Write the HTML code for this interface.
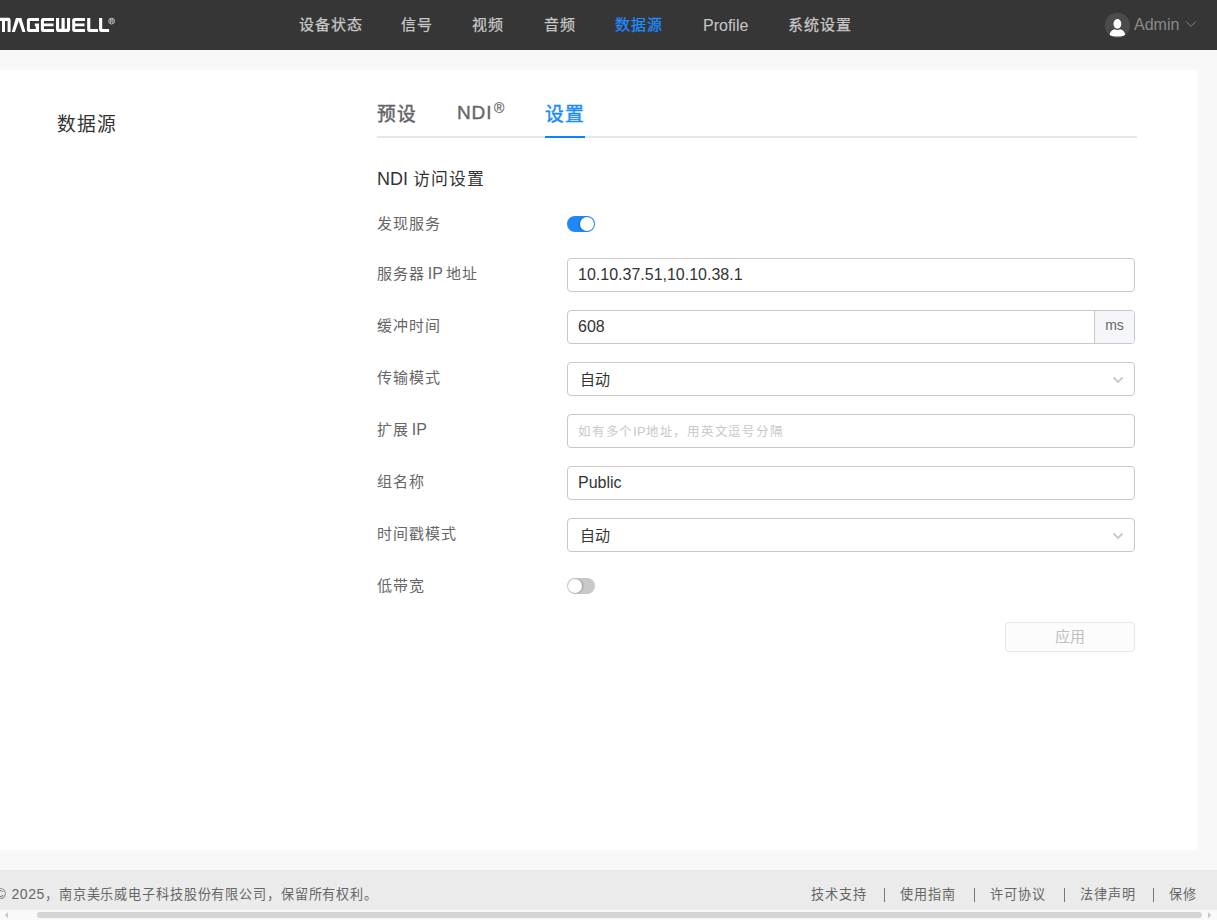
<!DOCTYPE html>
<html lang="zh-CN">
<head>
<meta charset="utf-8">
<style>
*{box-sizing:border-box;margin:0;padding:0}
html,body{width:1217px;height:920px;overflow:hidden;background:#f8f8f8;font-family:"Liberation Sans",sans-serif;color:#333}
.t{position:absolute;white-space:nowrap}
#hdr{position:absolute;left:0;top:0;width:1217px;height:50px;background:#363636}
.nav{position:absolute;top:14.7px;font-size:15px;letter-spacing:1px;color:#c8c8c8;-webkit-text-stroke:0.25px currentColor;line-height:20px;white-space:nowrap}
.L16{font-size:16px;letter-spacing:0;-webkit-text-stroke:0 !important}
.nav.L16{top:15.5px}
.nav.act{color:#1f8cff}
#panel{position:absolute;left:0;top:70px;width:1197px;height:780px;background:#fff}
.lbl{position:absolute;left:377px;font-size:15px;letter-spacing:1px;color:#666;line-height:20px;white-space:nowrap}
.inp{position:absolute;left:567px;width:568px;height:34px;border:1px solid #c8c8c8;border-radius:4px;background:#fff}
.inp>span{position:absolute;left:10px;top:6px;font-size:16px;line-height:20px;color:#333;white-space:nowrap}
.chev{position:absolute;right:10px;top:13px}
.tab{position:absolute;top:102.5px;font-size:18.75px;letter-spacing:1.25px;line-height:24px;color:#666;-webkit-text-stroke:0.45px #666}
#footer{position:absolute;left:0;top:870px;width:1217px;height:40px;background:#ebebeb}
.ft{position:absolute;top:16px;font-size:13.125px;letter-spacing:0.875px;line-height:18px;color:#666;white-space:nowrap}
.sep{position:absolute;top:18px;width:1px;height:14px;background:#777}
#sb{position:absolute;left:0;top:910px;width:1217px;height:10px;background:#f9f9f9}
</style>
</head>
<body>
<div id="hdr">
  <svg class="t" style="left:0;top:0" width="120" height="50" viewBox="0 0 120 50">
    <g fill="#fff">
      <!-- M (cut) -->
      <path d="M0 17.8H8.4Q10.6 17.8 10.6 20V32H7.6V21.1H5V32H2V21.1H0Z"/>
      <path d="M11.8 32L15.9 18H21.4L25.5 32H22.4L18.65 20.9L14.9 32Z"/>
      <path d="M29.4 18H39V21H29.9V29H35.8V26.2H34.8V23.4H39V32H29.4Q26.9 32 26.9 29.5V20.5Q26.9 18 29.4 18Z"/>
      <path d="M43.4 18H54V21H43.9V23.4H53.5V26.3H43.9V29H54V32H43.4Q40.9 32 40.9 29.5V20.5Q40.9 18 43.4 18Z"/>
      <path d="M56 18H59.1V28.7H61.5V18H64.7V28.7H67V18H70.1V29.2Q70.1 32 67.3 32H58.8Q56 32 56 29.2Z"/>
      <path d="M74.7 18H85V21H75.2V23.4H84.5V26.3H75.2V29H85V32H74.7Q72.2 32 72.2 29.5V20.5Q72.2 18 74.7 18Z"/>
      <path d="M87.2 18H90.3V29H98V32H89.7Q87.2 32 87.2 29.5Z"/>
      <path d="M99.1 18H102.2V29H109.1V32H101.6Q99.1 32 99.1 29.5Z"/>
    </g>
    <circle cx="111.6" cy="21.1" r="2.9" fill="none" stroke="#ddd" stroke-width="0.8"/>
    <path d="M110.6 23V19.4H112.1Q113 19.4 113 20.3Q113 21.1 112.1 21.1H110.6M112.1 21.1L113 23" fill="none" stroke="#ddd" stroke-width="0.7"/>
  </svg>
  <div class="nav" style="left:299px">设备状态</div>
  <div class="nav" style="left:401px">信号</div>
  <div class="nav" style="left:472px">视频</div>
  <div class="nav" style="left:544px">音频</div>
  <div class="nav act" style="left:615px">数据源</div>
  <div class="nav L16" style="left:703px">Profile</div>
  <div class="nav" style="left:788px">系统设置</div>
  <svg class="t" style="left:1104px;top:12px" width="27" height="27" viewBox="0 0 27 27">
    <defs><clipPath id="cc"><circle cx="13.4" cy="13.3" r="12.6"/></clipPath></defs>
    <circle cx="13.4" cy="13.3" r="12.6" fill="#4b4b4b"/>
    <g clip-path="url(#cc)" fill="#fff">
      <ellipse cx="13.4" cy="11.9" rx="3.9" ry="4.9"/>
      <path d="M5.6 22.8Q6.2 18.6 10.6 17.2Q13.4 18.6 16.2 17.2Q20.6 18.6 21.2 22.8Q20 24.6 13.4 24.6Q6.8 24.6 5.6 22.8Z"/>
    </g>
  </svg>
  <div class="nav L16" style="left:1134px;top:14.8px !important;color:#8a8a8a">Admin</div>
  <svg class="t" style="left:1185px;top:20px" width="12" height="8" viewBox="0 0 12 8">
    <path d="M1.2 1.6L6 6.4L10.8 1.6" fill="none" stroke="#858585" stroke-width="1"/>
  </svg>
</div>
<div id="panel"></div>
<div class="t" style="left:57px;top:112.5px;font-size:18.75px;letter-spacing:0.75px;line-height:24px;color:#333">数据源</div>
<div class="t tab" style="left:377px">预设</div>
<div class="t tab" style="left:457px;top:100.5px;font-size:19px;letter-spacing:0.9px;-webkit-text-stroke:0.4px #666">NDI</div>
<div class="t" style="left:494px;top:100px;font-size:14px;line-height:16px;color:#666;-webkit-text-stroke:0.2px #666">®</div>
<div class="t tab" style="left:545px;color:#1a8bff;-webkit-text-stroke:0.45px #1a8bff">设置</div>
<div class="t" style="left:377px;top:136px;width:760px;height:2px;background:#e4e7ed"></div>
<div class="t" style="left:545px;top:136px;width:40px;height:2px;background:#0b85fc"></div>
<div class="t" style="left:377px;top:168px;font-size:16.875px;letter-spacing:1.125px;line-height:22px;color:#333"><span style="font-size:18px;letter-spacing:0">NDI </span>访问设置</div>

<div class="lbl" style="top:214px">发现服务</div>
<div class="lbl" style="top:264px">服务器<span class="L16" style="margin-left:2.8px;margin-right:3px">IP</span>地址</div>
<div class="lbl" style="top:316px">缓冲时间</div>
<div class="lbl" style="top:368px">传输模式</div>
<div class="lbl" style="top:420px">扩展<span class="L16" style="margin-left:2.8px">IP</span></div>
<div class="lbl" style="top:472px">组名称</div>
<div class="lbl" style="top:524px">时间戳模式</div>
<div class="lbl" style="top:576px">低带宽</div>

<!-- toggle on -->
<div class="t" style="left:567px;top:216px;width:28px;height:16px;border-radius:8px;background:#2188f7"></div>
<div class="t" style="left:580px;top:217px;width:14px;height:14px;border-radius:50%;background:#fff;box-shadow:-1px 0 2px rgba(0,40,120,0.35)"></div>
<!-- toggle off -->
<div class="t" style="left:567px;top:578px;width:28px;height:16px;border-radius:8px;background:#c8c8c8"></div>
<div class="t" style="left:568px;top:579px;width:14px;height:14px;border-radius:50%;background:#fff;box-shadow:1px 0 2px rgba(0,0,0,0.25)"></div>

<div class="inp" style="top:258px"><span>10.10.37.51,10.10.38.1</span></div>
<div class="inp" style="top:310px"><span>608</span>
  <div style="position:absolute;right:0;top:0;width:40px;height:32px;border-left:1px solid #c8c8c8;background:#f4f6fa;border-radius:0 3px 3px 0;font-size:14px;line-height:29px;color:#666;text-align:center">ms</div>
</div>
<div class="inp" style="top:362px"><span style="left:12px;top:6.5px;font-size:15px">自动</span>
  <svg class="chev" width="12" height="8" viewBox="0 0 12 8"><path d="M1.5 1.5L6 6L10.5 1.5" fill="none" stroke="#c8c8c8" stroke-width="1.8"/></svg>
</div>
<div class="inp" style="top:414px"><span style="font-size:12.5px;letter-spacing:0.75px;color:#c8c8c8;top:7px">如有多个<span style="font-size:13px;letter-spacing:0.3px">IP</span>地址，用英文逗号分隔</span></div>
<div class="inp" style="top:466px"><span>Public</span></div>
<div class="inp" style="top:518px"><span style="left:12px;top:6.5px;font-size:15px">自动</span>
  <svg class="chev" width="12" height="8" viewBox="0 0 12 8"><path d="M1.5 1.5L6 6L10.5 1.5" fill="none" stroke="#c8c8c8" stroke-width="1.8"/></svg>
</div>

<div class="t" style="left:1005px;top:622px;width:130px;height:30px;border:1px solid #e6e6e6;border-radius:4px;background:#fcfcfc;color:#c0c0c0;font-size:15px;line-height:28px;text-align:center">应用</div>

<div id="footer">
  <div class="ft" style="left:-4.4px;top:15px"><span style="font-size:14px;letter-spacing:0">©</span><span style="font-size:14px;letter-spacing:0.55px;margin-left:5.6px">2025</span>，南京美乐威电子科技股份有限公司，保留所有权利。</div>
  <div class="ft" style="left:811px">技术支持</div>
  <div class="sep" style="left:884px"></div>
  <div class="ft" style="left:900px">使用指南</div>
  <div class="sep" style="left:974px"></div>
  <div class="ft" style="left:990px">许可协议</div>
  <div class="sep" style="left:1064px"></div>
  <div class="ft" style="left:1080px">法律声明</div>
  <div class="sep" style="left:1153px"></div>
  <div class="ft" style="left:1169px">保修</div>
</div>
<div id="sb">
  <div class="t" style="left:37px;top:1.5px;width:1165px;height:6.5px;border-radius:3.5px;background:#d5d5d5"></div>
  <svg class="t" style="left:4px;top:1px" width="6" height="8" viewBox="0 0 6 8"><path d="M4 1.2V7.2L0.6 4.2Z" fill="#c8c8c8"/></svg>
  <svg class="t" style="left:1207px;top:1px" width="6" height="8" viewBox="0 0 6 8"><path d="M1 1.2V7.2L4.4 4.2Z" fill="#c8c8c8"/></svg>
</div>
</body>
</html>
